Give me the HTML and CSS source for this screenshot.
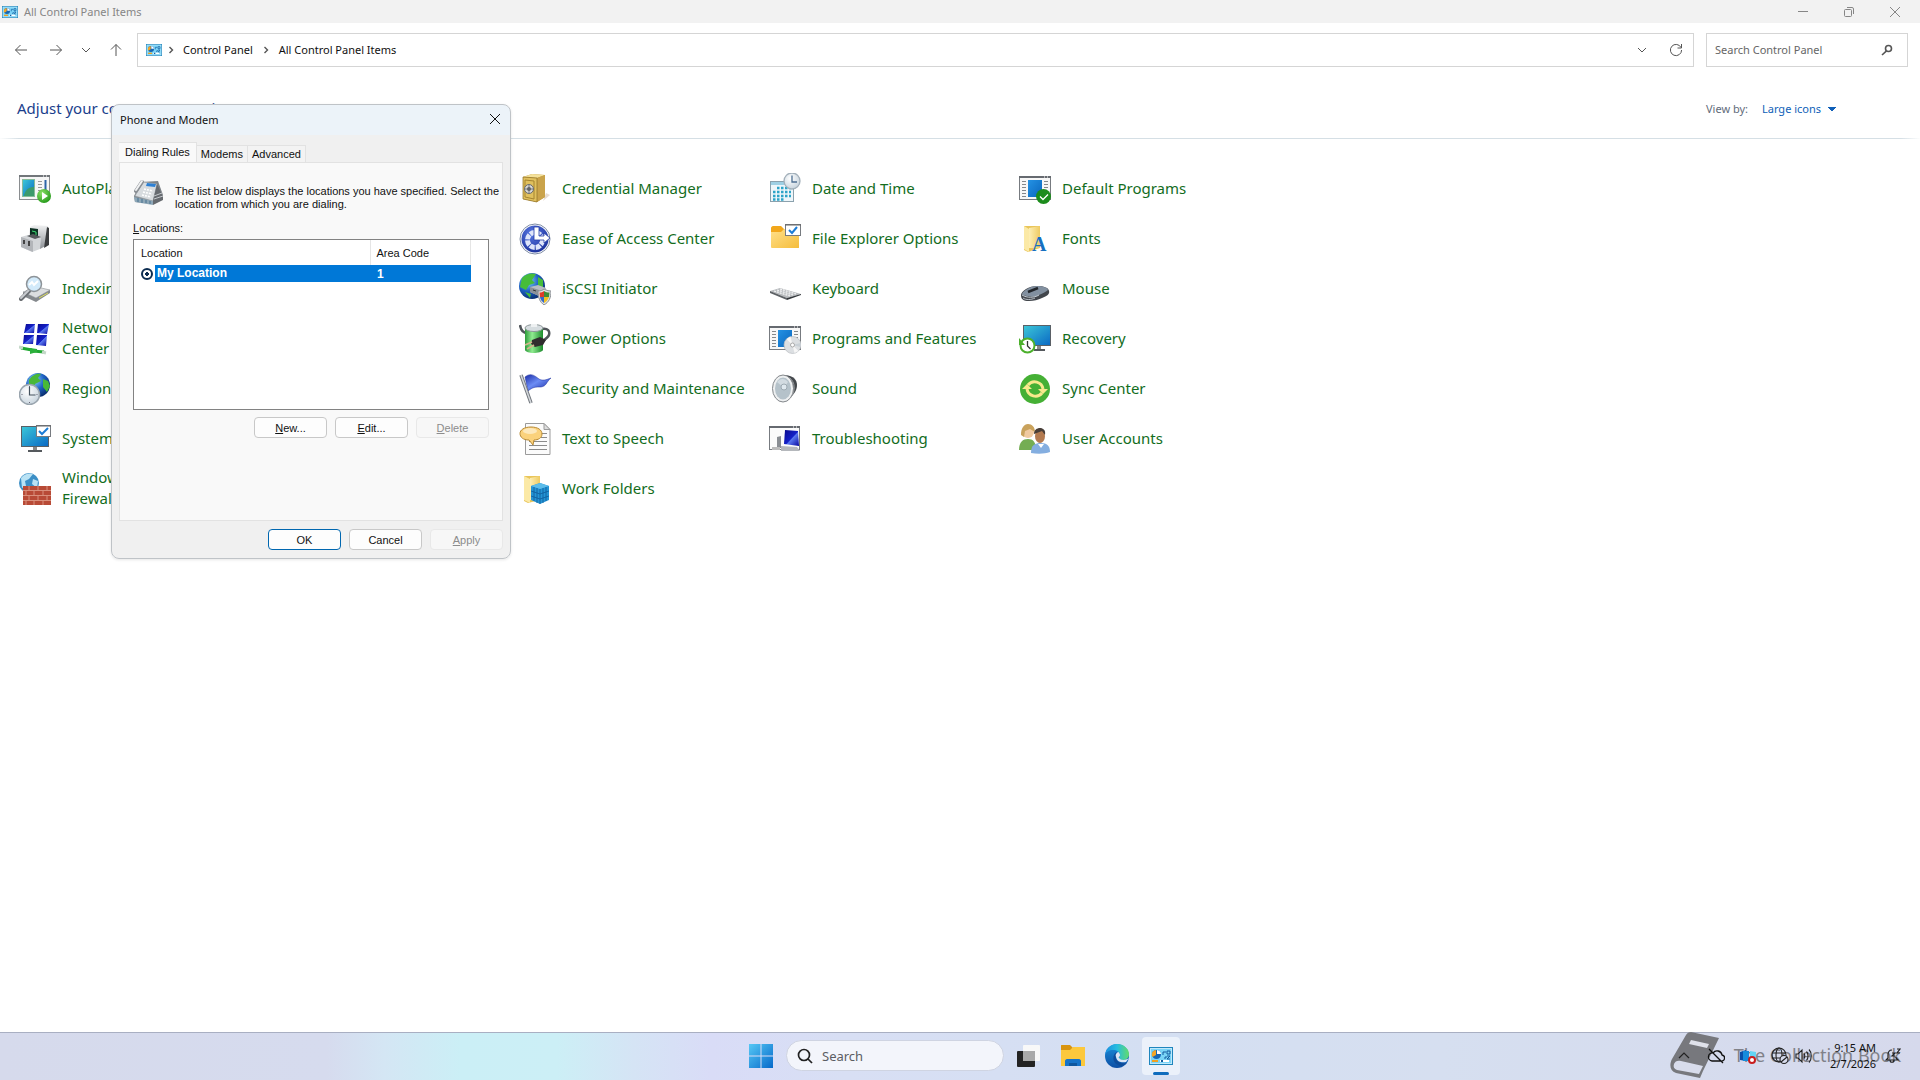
FILE: index.html
```html
<!DOCTYPE html>
<html lang="en">
<head>
    <meta charset="UTF-8">
    <meta name="viewport" content="width=device-width, initial-scale=1.0">
    <title>All Control Panel Items</title>
    <link rel="stylesheet" href="styles.css">
</head>
<body>
    <!-- shared gradients and symbols -->
    <svg class="defs" width="0" height="0" aria-hidden="true">
        <defs>
            <linearGradient id="screen" x1="0" y1="0" x2="1" y2="1"><stop offset="0" stop-color="#3cc8d8"/><stop offset="1" stop-color="#0a68c4"/></linearGradient>
            <linearGradient id="blue" x1="0" y1="0" x2="1" y2="1"><stop offset="0" stop-color="#2492e4"/><stop offset="1" stop-color="#0b66bd"/></linearGradient>
            <linearGradient id="navy" x1="0" y1="0" x2="1" y2="1"><stop offset="0" stop-color="#0a0a8c"/><stop offset=".5" stop-color="#1420c8"/><stop offset=".55" stop-color="#5a78f0"/><stop offset="1" stop-color="#0808a0"/></linearGradient>
            <linearGradient id="gold" x1="0" y1="0" x2="1" y2="1"><stop offset="0" stop-color="#ffe08a"/><stop offset="1" stop-color="#f5bd3c"/></linearGradient>
            <linearGradient id="paper" x1="0" y1="0" x2="1" y2="0"><stop offset="0" stop-color="#fdeeb4"/><stop offset="1" stop-color="#efcb62"/></linearGradient>
            <linearGradient id="steel" x1="0" y1="0" x2="0" y2="1"><stop offset="0" stop-color="#f0f1f2"/><stop offset="1" stop-color="#8d9196"/></linearGradient>
            <linearGradient id="green" x1="0" y1="0" x2="1" y2="0"><stop offset="0" stop-color="#2c9a3a"/><stop offset=".4" stop-color="#90ec90"/><stop offset="1" stop-color="#1b8a2c"/></linearGradient>
            <linearGradient id="flag" x1="0" y1="0" x2="1" y2="1"><stop offset="0" stop-color="#1a2ca8"/><stop offset=".45" stop-color="#6c8cf4"/><stop offset="1" stop-color="#1425a0"/></linearGradient>
            <radialGradient id="sea" cx=".35" cy=".3" r=".8"><stop offset="0" stop-color="#8ed6fa"/><stop offset=".5" stop-color="#1e62c4"/><stop offset="1" stop-color="#06245f"/></radialGradient>
            <radialGradient id="leaf" cx=".35" cy=".3" r=".8"><stop offset="0" stop-color="#8be066"/><stop offset="1" stop-color="#1c9414"/></radialGradient>
            <radialGradient id="royal" cx=".4" cy=".3" r=".8"><stop offset="0" stop-color="#5a7ae4"/><stop offset="1" stop-color="#152a94"/></radialGradient>
            <radialGradient id="dial" cx=".4" cy=".35" r=".7"><stop offset="0" stop-color="#fff"/><stop offset="1" stop-color="#c5d2dc"/></radialGradient>
            <linearGradient id="win" x1="0" y1="0" x2="1" y2="1"><stop offset="0" stop-color="#56c8f5"/><stop offset="1" stop-color="#0669ca"/></linearGradient>
            <linearGradient id="edgeA" x1="0" y1="0" x2="1" y2="0"><stop offset="0" stop-color="#1a8ee0"/><stop offset=".5" stop-color="#27bde0"/><stop offset="1" stop-color="#63dc6a"/></linearGradient>
            <linearGradient id="edgeB" x1="0" y1="0" x2="0" y2="1"><stop offset="0" stop-color="#1a90dc"/><stop offset="1" stop-color="#0c4ea4"/></linearGradient>
        </defs>
        <symbol id="cpanel" viewBox="0 0 24 18">
            <rect x=".5" y=".5" width="23" height="17" fill="#bfe9fb" stroke="#1f86bd"/>
            <rect x="2" y="2" width="20" height="14" fill="#7ad4f7"/>
            <circle cx="7.500" cy="7.500" r="4.500" fill="#1767b4"/>
            <path d="M7 8V3a4.500 4.500 0 0 0-3.500 7z" fill="#f5a623"/>
            <path d="M8 7V3a4.500 4.500 0 0 1 4 4z" fill="#fff"/>
            <path d="M14 8V5h3M18 4h3v3h-3zM15 11h2V9M18 9h3l-3 3h3" fill="none" stroke="#125a9e"/>
            <path d="M3 14h6" stroke="#f0a020" stroke-width="2"/>
            <path d="M11 14h9" stroke="#fff" stroke-width="2"/>
            <path d="M13 13v2" stroke="#125a9e" stroke-width="2"/>
        </symbol>
        <symbol id="chev" viewBox="0 0 10 10"><path d="M1 3l4 4 4-4" fill="none" stroke="currentColor"/></symbol>
        <symbol id="sep" viewBox="0 0 6 8"><path d="M1.500 1l3 3-3 3" fill="none" stroke="currentColor" stroke-width="1.400"/></symbol>
        <symbol id="cross" viewBox="0 0 12 12"><path d="M1 1l10 10M11 1L1 11" stroke="currentColor"/></symbol>
        <symbol id="progwin" viewBox="0 0 32 32">
            <rect x=".5" y="3.500" width="31" height="23" fill="#f7f7f7" stroke="#777b80"/>
            <path d="M0 4h32" stroke="#666a70" stroke-width="2"/>
            <path d="M25 4h1M28 4h1" stroke="#fff"/>
            <path d="M3 8.500h4M3 11.500h4M3 14.500h4M3 17.500h4M3 20.500h4M3 23.500h4M25 8.500h4M25 11.500h4M25 14.500h4" stroke="#84888c"/>
            <rect x="9" y="7" width="14" height="17" fill="url(#blue)"/>
        </symbol>
    </svg>

    <div class="window">
        <header class="titlebar">
            <svg class="cp-small"><use href="#cpanel"/></svg>
            <span class="title">All Control Panel Items</span>
            <div class="win-buttons">
                <button type="button" aria-label="Minimize"><svg width="12" height="12" viewBox="0 0 12 12"><path d="M1 5.500h10" stroke="currentColor"/></svg></button>
                <button type="button" aria-label="Restore"><svg width="12" height="12" viewBox="0 0 12 12" fill="none" stroke="currentColor"><rect x="1.500" y="3.500" width="7" height="7" rx="1"/><path d="M4 1.500h5a1.500 1.500 0 0 1 1.500 1.500v5"/></svg></button>
                <button type="button" aria-label="Close"><svg width="12" height="12"><use href="#cross"/></svg></button>
            </div>
        </header>

        <nav class="toolbar">
            <div class="nav-buttons">
                <button type="button" aria-label="Back"><svg width="14" height="14" viewBox="0 0 14 14" fill="none" stroke="currentColor"><path d="M13 7H1.500M6.500 2l-5 5 5 5"/></svg></button>
                <button type="button" class="forward" aria-label="Forward"><svg width="14" height="14" viewBox="0 0 14 14" fill="none" stroke="currentColor"><path d="M1 7h11.500M7.500 2l5 5-5 5"/></svg></button>
                <button type="button" aria-label="Recent locations"><svg width="10" height="10"><use href="#chev"/></svg></button>
                <button type="button" aria-label="Up"><svg width="14" height="14" viewBox="0 0 14 14" fill="none" stroke="currentColor"><path d="M7 13V1.500M2 6.500l5-5 5 5"/></svg></button>
            </div>
            <div class="address">
                <svg class="cp-small"><use href="#cpanel"/></svg>
                <svg class="sep"><use href="#sep"/></svg>
                <a href="#">Control Panel</a>
                <svg class="sep"><use href="#sep"/></svg>
                <a href="#">All Control Panel Items</a>
                <div class="address-tools">
                    <button type="button" aria-label="Previous locations"><svg width="10" height="10"><use href="#chev"/></svg></button>
                    <button type="button" aria-label="Refresh"><svg width="14" height="14" viewBox="0 0 14 14" fill="none" stroke="currentColor"><path d="M12 4.500A5.600 5.600 0 1 0 12.600 7M12.500 1v4h-4"/></svg></button>
                </div>
            </div>
            <div class="search-box">
                <input type="text" placeholder="Search Control Panel" aria-label="Search Control Panel">
                <svg width="12" height="12" viewBox="0 0 12 12" fill="none" stroke="#555" stroke-width="1.600"><circle cx="7.500" cy="4.500" r="3"/><path d="M5.500 6.800L1 11"/></svg>
            </div>
        </nav>

        <div class="subhead">
            <h1>Adjust your computer's settings</h1>
            <label for="view">View by:</label>
            <select id="view">
                <option>Large icons</option>
                <option>Small icons</option>
                <option>Category</option>
            </select>
        </div>

        <main class="items">
            <a href="#" class="item">
                <svg viewBox="0 0 32 32"><rect x=".5" y="2.500" width="30" height="24" fill="#f6f6f6" stroke="#8a8d90"/><path d="M0 3h31" stroke="#72767a" stroke-width="2"/><path d="M24 3h1M27 3h1" stroke="#fff"/><rect x="3.500" y="6.500" width="12" height="17" fill="url(#screen)" stroke="#8b9"/><path d="M5 22c2-6 5-8 10-8v9H5z" fill="#3c9a6c"/><path d="M19 8.500h4M19 11.500h4M19 14.500h4M19 17.500h4" stroke="#999"/><path d="M26.500 7v10" stroke="#2c64a8" stroke-width="2"/><circle cx="25" cy="23" r="7" fill="url(#leaf)"/><path d="M23 19l6 4-6 4z" fill="#fff"/></svg>
                <span>AutoPlay</span>
            </a>
            <a href="#" class="item">
                <svg viewBox="0 0 32 32"><path d="M11 4l4-2 14 1 1 18-9 5-11-6z" fill="url(#steel)"/><path d="M28 4l2 1v17l-5 3z" fill="#3a3c3e"/><path d="M11 5l8 1v9l-8-2z" fill="#0c3022"/><path d="M13 8l4 1v3" stroke="#3ddc70" fill="none"/><path d="M2 14l7-2 13 3-1 11-8 3-11-5z" fill="#d2d5d8"/><path d="M2 14l12 4v11L2 24z" fill="#b2b5b9"/><path d="M5 17v4M10 18v5" stroke="#444" stroke-width="2"/><path d="M8 13l6-2 8 3-6 2z" fill="#55585b"/></svg>
                <span>Device Manager</span>
            </a>
            <a href="#" class="item">
                <svg viewBox="0 0 32 32"><path d="M4 19l14-5 13 3-14 8z" fill="#dcdee0" stroke="#8c9094" stroke-width=".6"/><path d="M4 19l13 6v4L4 23zM17 25l14-8v3l-14 9z" fill="#85898d"/><path d="M20 25l9-5" stroke="#dadc60"/><path d="M2 26l8-8" stroke="#6b6f73" stroke-width="4" stroke-linecap="round"/><path d="M2 25l8-8" stroke="#c9ccd0" stroke-width="2" stroke-linecap="round"/><circle cx="15" cy="11" r="7.500" fill="#d2eafa" stroke="#8d9398" stroke-width="1.500"/><path d="M10 12l3-3 2 3 4-4" stroke="#fff" stroke-width="2" fill="none"/></svg>
                <span>Indexing Options</span>
            </a>
            <a href="#" class="item">
                <svg viewBox="0 0 32 32"><path d="M7 1h9l-1 9H5z" fill="url(#navy)"/><path d="M19 1h11l-2 10-10-1z" fill="url(#navy)"/><path d="M5 12h10l-1 9H4z" fill="url(#navy)"/><path d="M18 12h10l-1 11-10-1z" fill="url(#navy)"/><path d="M2 25l11 2M14 28l11 1" stroke="#20a832" stroke-width="3"/><path d="M0 24l4 1M23 29l4 1" stroke="#c4d8c8" stroke-width="3"/><path d="M11 25l7 1v3l-7 2z" fill="#2cb03c"/></svg>
                <span>Network and Sharing Center</span>
            </a>
            <a href="#" class="item">
                <svg viewBox="0 0 32 32"><circle cx="19" cy="12" r="12" fill="url(#sea)"/><path d="M10 7c4-6 9-7 12-6l-3 4 3 3-6 3-2 5-4-3zM24 6l5 2 2 5-3 6-4-5z" fill="#48b838"/><circle cx="10.500" cy="21.500" r="10" fill="url(#dial)" stroke="#9aa5ae" stroke-width="1.500"/><path d="M10.500 14v8h6" fill="none" stroke="#44525e" stroke-width="1.200"/><path d="M10.500 13v1M10.500 29v1M2.500 21.500h1M17.500 21.500h1" stroke="#667"/></svg>
                <span>Region</span>
            </a>
            <a href="#" class="item">
                <svg viewBox="0 0 32 32"><rect x="2.500" y="3.500" width="27" height="20" fill="url(#screen)" stroke="#5a6066"/><path d="M14 24h4v4h-4z" fill="#888"/><path d="M9 28h14" stroke="#55595d" stroke-width="2"/><rect x="17.500" y="2.500" width="14" height="11" fill="#fff" stroke="#777b80"/><path d="M17 3h15" stroke="#666"/><path d="M20 8l3 3 6-6" fill="none" stroke="#1c7cd6" stroke-width="2"/></svg>
                <span>System</span>
            </a>
            <a href="#" class="item">
                <svg viewBox="0 0 32 32"><circle cx="10" cy="10" r="10" fill="#3c8fc6"/><path d="M2 5c4-5 9-5 12-4l-4 5-4 2 1 5-4 2zM14 6l5 2-1 7-5-4z" fill="#b9e2f4"/><path d="M4 13h28v19H4z" fill="#b84a36"/><path d="M4 17.500h28M4 22.500h28M4 27.500h28M10 13v4M19 13v4M28 13v4M7 18v4M15 18v4M24 18v4M10 23v4M19 23v4M28 23v4M7 28v4M15 28v4M24 28v4" stroke="#d98f7c"/></svg>
                <span>Windows Defender Firewall</span>
            </a>

            <a href="#" class="item">
                <svg viewBox="0 0 32 32"><path d="M27 20l4 2-7 6z" fill="#e7dcd0"/><path d="M4 4l9-3 13 1v22l-8 5-14-3z" fill="#b9943a"/><path d="M4 4l9-3 13 1-8 3z" fill="#f4e19a"/><path d="M18 5l8-3v22l-8 5z" fill="#caa34a"/><path d="M4 4l14 1v24L4 26z" fill="#e0c05e" stroke="#8d6d22" stroke-width=".7"/><path d="M6 7l9 1v18l-9-2z" fill="none" stroke="#a5842f"/><circle cx="10" cy="16" r="4.500" fill="#d7d7d5" stroke="#66686b"/><path d="M10 11v10M5 16h10" stroke="#77797c"/><circle cx="10" cy="16" r="2" fill="#606367"/></svg>
                <span>Credential Manager</span>
            </a>
            <a href="#" class="item">
                <svg viewBox="0 0 32 32"><circle cx="16" cy="16" r="15" fill="#fff" stroke="#7d8ba4"/><circle cx="16" cy="16" r="13.500" fill="url(#royal)"/><circle cx="16" cy="17" r="7.500" fill="none" stroke="#dfe6fa" stroke-width="5" stroke-dasharray="5 1"/><path d="M15 4h5v9h5v-3l6 5-6 5v-3H15z" fill="#fff" stroke="#243da6" stroke-width=".8"/></svg>
                <span>Ease of Access Center</span>
            </a>
            <a href="#" class="item">
                <svg viewBox="0 0 32 32"><circle cx="13" cy="13" r="13" fill="url(#sea)"/><path d="M3 5c5-5 10-5 14-4l-4 6 3 3-6 2-3 5-6-3zM19 4l5 3v8l-5-3zM6 19l6 2-1 4z" fill="#46bd3a"/><path d="M11 14l8-2 8 3v6l-7 2-9-4z" fill="#b9bec4"/><path d="M11 14l9 3v6l-9-4z" fill="#8c9299"/><path d="M14 17l3 1" stroke="#333"/><path d="M19 18c3 0 5-1 6-2 2 1 4 2 7 2 0 7-2 11-7 14-4-3-6-7-6-14z" fill="#dfe2e4" stroke="#8b8f93"/><path d="M20.500 19.500c2 0 3-.5 4.500-1.500v6h-4z" fill="#e03a28"/><path d="M25 18c2 1 3 1.500 5.500 1.500L30 24h-5z" fill="#3f8d37"/><path d="M21 24h4v6c-2-2-3.500-3-4-6z" fill="#3468c8"/><path d="M25 24h5c-1 3-3 5-5 6z" fill="#f1c022"/></svg>
                <span>iSCSI Initiator</span>
            </a>
            <a href="#" class="item">
                <svg viewBox="0 0 32 32"><path d="M1 2c1 6 3 8 7 8M23 6c6-1 8 2 7 6-1 3-5 5-8 7" fill="none" stroke="#50555a" stroke-width="2.500"/><path d="M6 5v22c1 4 16 4 18 0V5z" fill="url(#green)"/><ellipse cx="15" cy="5" rx="9" ry="3.500" fill="#d6dde0" stroke="#8e9699"/><path d="M12 1h6v3h-6z" fill="#eef1f2"/><path d="M13 17l8-3 6 3-3 5-8 2-4-3z" fill="#302c2e"/><path d="M13 19l-7 3M15 22l-7 4" stroke="#d2b48c" stroke-width="1.800"/></svg>
                <span>Power Options</span>
            </a>
            <a href="#" class="item">
                <svg viewBox="0 0 32 32"><path d="M6 4c6-5 10-1 14 2 3 2 7 1 12-1-5 4-4 8-10 9-6 0-8 0-13 4z" fill="url(#flag)" stroke="#1c2e9c" stroke-width=".5"/><path d="M2 2l10 28" stroke="#71767c" stroke-width="3.500"/><path d="M2 2l10 28" stroke="#d4d8dc" stroke-width="1.500"/></svg>
                <span>Security and Maintenance</span>
            </a>
            <a href="#" class="item">
                <svg viewBox="0 0 32 32"><path d="M6.500.5H25l6 6v25H6.500z" fill="#fbfbfb" stroke="#9b9b9b"/><path d="M25 .5v6h6z" fill="#ddd" stroke="#9b9b9b"/><path d="M10 18.500h18M10 22.500h18M10 26.500h18M22 10.500h6M22 14.500h6" stroke="#8b8b8b"/><path d="M12 4c7 0 11 3 11 7s-4 6-8 6l-1 5-4-5c-6 0-9-3-9-6.500S5 4 12 4z" fill="#fbd27c" stroke="#b88a34"/><ellipse cx="11" cy="8" rx="7" ry="3" fill="#fde9bd"/></svg>
                <span>Text to Speech</span>
            </a>
            <a href="#" class="item">
                <svg viewBox="0 0 32 32"><path d="M5 3h16v24l-12 3-4-2z" fill="#e9c55a"/><path d="M5 3l6 3v24l-6-3z" fill="#fbe9a6"/><path d="M11 5l10-2v24H11z" fill="url(#paper)"/><path d="M12 13l9-3 9 3v14l-9 4-9-4z" fill="#2494d4"/><path d="M12 13l9-3 9 3-9 3z" fill="#5cbcea"/><path d="M21 16v15M15 14v14M18 15v15M24 15v15M27 14v14M12 18l9 3 9-3M12 23l9 3 9-3" stroke="#0f5c9a" stroke-width=".8" fill="none"/></svg>
                <span>Work Folders</span>
            </a>

            <a href="#" class="item">
                <svg viewBox="0 0 32 32"><rect x="1.500" y="8.500" width="23" height="20" fill="#eef6fa" stroke="#8ba1ad"/><path d="M2 9h22v3H2z" fill="#9fd0e4"/><path d="M8 15h14M4 19h18M4 23h18M4 26.500h11" stroke="#2da4c8" stroke-width="2.500" stroke-dasharray="2.500 1.500"/><circle cx="23" cy="8" r="8" fill="url(#dial)" stroke="#a3b0ba" stroke-width="1.300"/><path d="M23 2.500V9h5" fill="none" stroke="#4d6f92" stroke-width="1.300"/></svg>
                <span>Date and Time</span>
            </a>
            <a href="#" class="item">
                <svg viewBox="0 0 32 32"><path d="M2 5c0-1 1-2 2-2h8l3 3v6H2z" fill="#f2a71b"/><path d="M2 9h10l3-3h15v18c0 1 0 1-1 1H3c-1 0-1-1-1-1z" fill="url(#gold)"/><rect x="16.500" y="1.500" width="15" height="11" fill="#fff" stroke="#777b80"/><path d="M16 2h16" stroke="#666"/><path d="M20 7l3 3 5-6" fill="none" stroke="#1c7cd6" stroke-width="2"/></svg>
                <span>File Explorer Options</span>
            </a>
            <a href="#" class="item">
                <svg viewBox="0 0 32 32"><path d="M1 18l10-3 21 6-14 4z" fill="#b8bbbe"/><path d="M1 18l17 7v2L1 20z" fill="#5d6165"/><path d="M18 25l14-4v1l-14 5z" fill="#35393d"/><path d="M5 18l16 5M8 17l16 5M11 16l16 5" stroke="#f4f5f6" stroke-width="1.300" stroke-dasharray="2 1"/></svg>
                <span>Keyboard</span>
            </a>
            <a href="#" class="item">
                <svg viewBox="0 0 32 32"><use href="#progwin"/><circle cx="23.500" cy="22" r="8.500" fill="#dcdfe2" stroke="#b8bcc0" stroke-width=".7"/><path d="M23.500 22l-6-6 4-2.500zM23.500 22l6 6-4 2z" fill="#f6f6f6"/><path d="M23.500 22l8-2v4z" fill="#c9d0d6"/><circle cx="23.500" cy="22" r="2" fill="#fff" stroke="#aaa"/></svg>
                <span>Programs and Features</span>
            </a>
            <a href="#" class="item">
                <svg viewBox="0 0 32 32"><path d="M16 2c9 1 12 5 12 10s-3 11-12 16z" fill="#44484c"/><path d="M21 5c5 4 6 13 1 19" fill="none" stroke="#8f9396"/><ellipse cx="14" cy="15.500" rx="10.500" ry="13.500" fill="#eef0f1" stroke="#83878b"/><ellipse cx="14" cy="15.500" rx="8" ry="11" fill="#b5c2ca"/><path d="M8 9c3-4 8-4 11 0l-4 6z" fill="#d2dbe1"/><circle cx="15" cy="14" r="3" fill="#dfe8ee" stroke="#9eaab2"/></svg>
                <span>Sound</span>
            </a>
            <a href="#" class="item">
                <svg viewBox="0 0 32 32"><rect x=".5" y="3.500" width="30" height="23" fill="#fbfbfb" stroke="#777b80"/><path d="M0 4h31" stroke="#666a70" stroke-width="2"/><path d="M24 4h1M27 4h1" stroke="#fff"/><path d="M8 14l4-1v12H8z" fill="#8a8e93"/><path d="M3 24h8v3H3z" fill="#bbb"/><path d="M16 7l13 1 1 15-15-2z" fill="url(#navy)"/><path d="M12 23l16 1 3 4H12z" fill="#b5b8bc"/></svg>
                <span>Troubleshooting</span>
            </a>

            <a href="#" class="item">
                <svg viewBox="0 0 32 32"><use href="#progwin"/><circle cx="24.500" cy="23.500" r="7.500" fill="#1c8c1c"/><path d="M21 23.500l3 3 5-5" fill="none" stroke="#fff" stroke-width="1.300"/></svg>
                <span>Default Programs</span>
            </a>
            <a href="#" class="item">
                <svg viewBox="0 0 32 32"><path d="M5 3h16v22l-12 4-4-2z" fill="#e9c55a"/><path d="M5 3l5 3v23l-5-3z" fill="#fbe9a6"/><path d="M10 5l11-2v22H10z" fill="url(#paper)"/><text x="13" y="28" class="glyph">A</text></svg>
                <span>Fonts</span>
            </a>
            <a href="#" class="item">
                <svg viewBox="0 0 32 32"><path d="M2 22c0-4 8-9 16-9 7 0 12 2 12 5 1 3-2 5-7 7-4 2-8 3-13 3-6 0-8-2-8-6z" fill="#42464c"/><path d="M3 21c1-3 8-8 15-8 6 0 11 2 11 4-2 2-5 3-9 5-4 2-7 2-11 1-3 0-6-1-6-2z" fill="#8290a0"/><path d="M3 22c5 3 12 3 17 0" fill="none" stroke="#c0c8d0"/><path d="M9 19l10-4" stroke="#22262b" stroke-width="2.500"/><path d="M4 25c3 2 8 2 12 0" fill="none" stroke="#b8bec5"/></svg>
                <span>Mouse</span>
            </a>
            <a href="#" class="item">
                <svg viewBox="0 0 32 32"><rect x="4.500" y="2.500" width="27" height="20" fill="url(#screen)" stroke="#5a6066"/><path d="M18 23h4v4h-4z" fill="#888"/><path d="M15 27h11" stroke="#55595d" stroke-width="2"/><circle cx="8.500" cy="22.500" r="7" fill="#fff" stroke="#4cb02c" stroke-width="2"/><path d="M0 15v7h6z" fill="#4cb02c"/><path d="M8.500 18v5l3 3" fill="none" stroke="#333" stroke-width="1.300"/></svg>
                <span>Recovery</span>
            </a>
            <a href="#" class="item">
                <svg viewBox="0 0 32 32"><circle cx="16" cy="16" r="15" fill="#45b035"/><path d="M9 12a8.500 8.500 0 0 1 15 4M23 20a8.500 8.500 0 0 1-15-4" fill="none" stroke="#f7e98c" stroke-width="3"/><path d="M19 16h10l-5 5zM3 16h10l-5-5z" fill="#f7e98c"/></svg>
                <span>Sync Center</span>
            </a>
            <a href="#" class="item">
                <svg viewBox="0 0 32 32"><path d="M0 27c0-8 4-11 9-11s8 3 8 11z" fill="#74ad53"/><circle cx="9" cy="9" r="6" fill="#f0c9a0"/><path d="M2 12c0-7 3-11 7-11s7 3 7 8l-5-3-5 2-1 6z" fill="#c9a25c"/><path d="M12 30c0-8 4-10 10-10s9 3 9 9c-5 2-13 2-19 1z" fill="#84aee0"/><ellipse cx="21" cy="13" rx="5" ry="7" fill="#b37a50"/><path d="M15 11c0-4 3-6 6-6s6 2 5 7l-3-4z" fill="#483e38"/><path d="M19 21l3 4 3-4z" fill="#fff"/></svg>
                <span>User Accounts</span>
            </a>
        </main>
    </div>

    <section class="dialog" role="dialog" aria-labelledby="dialog-title">
        <header class="dialog-head">
            <h2 id="dialog-title">Phone and Modem</h2>
            <button type="button" aria-label="Close"><svg width="12" height="12"><use href="#cross"/></svg></button>
        </header>
        <div class="tabs" role="tablist">
            <button type="button" role="tab" class="tab active" aria-selected="true">Dialing Rules</button>
            <button type="button" role="tab" class="tab">Modems</button>
            <button type="button" role="tab" class="tab">Advanced</button>
        </div>
        <div class="panel">
            <div class="intro">
                <svg width="32" height="32" viewBox="0 0 32 32">
                    <path d="M1 19l7-14 17-1 5 14v4l-10 5L2 25z" fill="#7d8388"/>
                    <path d="M2 19l8-14 14 2-4 17z" fill="#d8dcdf" stroke="#999ea3" stroke-width=".6"/>
                    <path d="M1 20l19 4v4L2 25z" fill="#8ea7b7"/>
                    <path d="M20 24l4-17 6 13v3l-10 5z" fill="#666a6f"/>
                    <path d="M21 19l8-3M21 22l9-3" stroke="#c4c8cc"/>
                    <path d="M14 6l9 1-1 3-9-1z" fill="#2c80d4"/>
                    <path d="M11 12l9 2M10 15l9 2M9 18l9 2" stroke="#fff" stroke-width="1.500" stroke-dasharray="2 1"/>
                    <path d="M3 14l6-9" stroke="#8b9095" stroke-width="4" stroke-linecap="round"/>
                    <path d="M3 13l6-9" stroke="#f1f2f3" stroke-width="2" stroke-linecap="round"/>
                    <path d="M5 21v4M9 22v4M13 23v3M17 24v3" stroke="#46708f"/>
                </svg>
                <p>The list below displays the locations you have specified. Select the<br>location from which you are dialing.</p>
            </div>
            <p class="list-label" id="loc-label"><u>L</u>ocations:</p>
            <div class="list">
                <table aria-labelledby="loc-label">
                    <thead>
                        <tr><th class="col-loc">Location</th><th class="col-code">Area Code</th></tr>
                    </thead>
                    <tbody>
                        <tr>
                            <td><label class="loc"><input type="radio" name="location" checked><span>My Location</span></label></td>
                            <td class="code">1</td>
                        </tr>
                    </tbody>
                </table>
            </div>
            <div class="buttons">
                <button type="button" class="btn"><u>N</u>ew...</button>
                <button type="button" class="btn"><u>E</u>dit...</button>
                <button type="button" class="btn" disabled><u>D</u>elete</button>
            </div>
        </div>
        <footer class="buttons dialog-foot">
            <button type="button" class="btn default">OK</button>
            <button type="button" class="btn">Cancel</button>
            <button type="button" class="btn" disabled><u>A</u>pply</button>
        </footer>
    </section>

    <footer class="taskbar">
        <div class="apps">
            <button type="button" class="app" aria-label="Start"><svg width="24" height="24" viewBox="0 0 24 24" fill="url(#win)"><path d="M0 0h11.500v11.500H0zM12.500 0H24v11.500H12.500zM0 12.500h11.500V24H0zM12.500 12.500H24V24H12.500z"/></svg></button>
            <label class="task-search">
                <svg width="16" height="16" viewBox="0 0 16 16" fill="none" stroke="#222" stroke-width="1.700"><circle cx="7" cy="7" r="5.500"/><path d="M11 11l4 4"/></svg>
                <input type="text" placeholder="Search" aria-label="Search">
            </label>
            <button type="button" class="app" aria-label="Task View"><svg width="24" height="24" viewBox="0 0 24 24"><rect x="6" y="1" width="17" height="16" rx="1" fill="#f8f8f8"/><rect x="0" y="7" width="18" height="16" rx="1" fill="#232323"/><path d="M6 7h12v10H6z" fill="#a9a9a9"/></svg></button>
            <button type="button" class="app" aria-label="File Explorer"><svg width="24" height="24" viewBox="0 0 24 24"><path d="M0 2c0-1 0-1 1-1h8l3 3v4H0z" fill="#d9940e"/><path d="M0 6h9l3-3h12v18c0 1 0 1-1 1H1c-1 0-1 0-1-1z" fill="#fcc83c"/><path d="M4 22v-5c0-1 1-2 2-2h12c1 0 2 1 2 2v5z" fill="#1673c8"/><path d="M8 22v-3h8v3z" fill="#0f579e"/></svg></button>
            <button type="button" class="app" aria-label="Edge"><svg width="24" height="24" viewBox="0 0 24 24"><circle cx="12" cy="12" r="12" fill="url(#edgeB)"/><path d="M0 11C1 4 6 0 12 0c7 0 12 5 12 10 0 4-3 6-6 6-3 0-4-1-4-2s1-1 1-3c0-3-3-5-7-5-4 0-7 2-8 5z" fill="url(#edgeA)"/><path d="M9 11c-2 5 1 10 7 11 2 0 4-1 6-3-6 2-12-2-11-7 0-2 1-3 2-3-2-1-3 0-4 2z" fill="#0d4c9a"/><path d="M14 14c-1-1 1-1 1-3 0-1-1-3-2-3-2 1-3 3-2 5 1 5 6 6 10 5l3-4c-2 2-8 3-10 0z" fill="#dbe6f5"/></svg></button>
            <button type="button" class="app current" aria-label="Control Panel"><svg width="24" height="18"><use href="#cpanel"/></svg></button>
        </div>
        <div class="tray">
            <svg width="12" height="16" viewBox="0 0 12 16" fill="none" stroke="#222" stroke-width="1.200"><path d="M1 10l5-5 5 5"/></svg>
            <svg class="cloud" width="18" height="16" viewBox="0 0 18 16" fill="none" stroke="#111" stroke-width="1.300"><path d="M5 13h9a3 3 0 0 0 1-6 5 5 0 0 0-9-2 4 4 0 0 0-1 8zM2 1l14 14"/></svg>
            <svg class="store" width="18" height="16" viewBox="0 0 18 16"><path d="M1 4l6-2v11l-6-1z" fill="#0b4ea8"/><path d="M4 3h6v10H4z" fill="#168bdc"/><path d="M11 3l6 1v6h-6z" fill="#63d4f4"/><circle cx="13" cy="12" r="3" fill="#fff" stroke="#c81e1e" stroke-width="2"/></svg>
            <svg class="globe" width="18" height="18" viewBox="0 0 18 18" fill="none" stroke="#222" stroke-width="1.100"><circle cx="8" cy="8" r="7"/><ellipse cx="8" cy="8" rx="3" ry="7"/><path d="M1 6h14M1 11h9"/><circle cx="13" cy="12.500" r="4" fill="#d6daeb"/><path d="M10 15l6-5"/></svg>
            <svg width="18" height="16" viewBox="0 0 18 16" fill="none" stroke="#222" stroke-width="1.100"><path d="M1 6h2l4-4v12l-4-4H1zM9 5.500c1 1 1 4 0 5M11.500 3.500c2 2 2 7 0 9M14 1.500c3 3 3 10 0 13"/></svg>
            <time class="clock">9:15 AM<br>2/7/2026</time>
            <svg width="16" height="16" viewBox="0 0 16 16" fill="none" stroke="#222" stroke-width="1.200"><path d="M7 2C4 2 3 4 3 7v3l-2 2h12l-2-2V9M5 12c0 3 4 3 4 0M7 5h3L7 8h3M12 1h3l-3 4h3"/></svg>
        </div>
    </footer>

    <div class="watermark">
        <svg width="50" height="46" viewBox="0 0 50 46"><path d="M21 0l28 6-16 33-3 7L6 41C0 39-1 33 2 27L16 3c1-2 3-3 5-3z" fill="#77787d"/><path d="M4 32c1-3 4-4 7-3l22 5-4 8L7 38c-3-1-4-3-3-6z" fill="#d8dcec"/><path d="M21 8l18 4-2 4-18-4z" fill="#dfe1ea"/></svg>
        <span>The Collection Book</span>
    </div>
</body>
</html>
```

FILE: styles.css
```css
* {
    box-sizing: border-box;
}
body {
    margin: 0;
    min-height: 100vh;
    display: flex;
    flex-direction: column;
    background: #fff;
    color: #111;
    font-family: "Noto Sans", "Open Sans", sans-serif;
    font-size: 11px;
}
button {
    font: inherit;
    color: inherit;
    background: none;
    border: 0;
    padding: 0;
}
button, a, label {
    cursor: pointer;
}
a {
    color: inherit;
    text-decoration: none;
}
svg {
    display: block;
    flex: none;
}
.defs {
    position: absolute;
}
.window {
    flex: 1;
}

/* title bar */
.titlebar {
    display: flex;
    align-items: center;
    height: 23px;
    padding-left: 2px;
    background: #f2f2f2;
    color: #868686;
}
.cp-small {
    width: 16px;
    height: 12px;
}
.title {
    margin-left: 6px;
}
.win-buttons {
    display: flex;
    margin-left: auto;
    margin-right: 2px;
}
.win-buttons button {
    display: grid;
    place-items: center;
    width: 46px;
    height: 20px;
}

/* navigation row */
.toolbar {
    display: flex;
    align-items: center;
    padding: 10px 12px 10px 0;
    color: #555;
}
.nav-buttons {
    display: flex;
    align-items: center;
    width: 137px;
    padding-left: 14px;
    gap: 18px;
}
.nav-buttons .forward {
    margin-left: 3px;
}
.address {
    flex: 1;
    display: flex;
    align-items: center;
    height: 34px;
    padding: 0 10px 0 8px;
    border: 1px solid #d5d5d5;
}
.address a {
    padding-bottom: 2px;
    color: #111;
}
.sep {
    width: 6px;
    height: 8px;
    margin: 0 9px 0 6px;
}
.address a + .sep {
    margin: 0 10px;
}
.address-tools {
    display: flex;
    align-items: center;
    gap: 22px;
    margin-left: auto;
}
.search-box {
    display: flex;
    align-items: center;
    width: 202px;
    height: 34px;
    margin-left: 12px;
    padding: 0 14px 0 8px;
    border: 1px solid #d5d5d5;
}
.search-box input {
    flex: 1;
    min-width: 0;
    padding: 0 0 2px;
    border: 0;
    outline: 0;
    background: none;
    font: inherit;
}
.search-box input::placeholder {
    color: #666;
}

/* heading */
.subhead {
    display: flex;
    align-items: center;
    height: 62px;
    padding: 2px 84px 0 17px;
    border-bottom: 1px solid;
    border-image: linear-gradient(to right, #fff, #d5dfe5 20px, #d5dfe5 calc(100% - 20px), #fff) 1;
}
.subhead h1 {
    flex: 1;
    margin: 0;
    padding-bottom: 2px;
    font-size: 15px;
    font-weight: normal;
    color: #1a3e8c;
}
.subhead label {
    margin-right: 14px;
    color: #5f6b7a;
}
.subhead select {
    appearance: none;
    width: 74px;
    padding: 0;
    border: 0;
    font: inherit;
    color: #0f5fb8;
    background: conic-gradient(from -45deg at 50% 100%, #0f5fb8 90deg, transparent 0) right 6px / 8px 4px no-repeat;
}

/* large icon list, filled column by column */
.items {
    display: grid;
    grid-template-rows: repeat(7, 50px);
    grid-template-columns: repeat(5, 250px);
    grid-auto-flow: column;
    padding: 25px 19px;
}
.item {
    display: flex;
    align-items: center;
    gap: 11px;
    padding-right: 32px;
    font-size: 15px;
    line-height: 21px;
    color: #136d1d;
}
.item:nth-child(n + 8) {
    grid-column: 3;
    padding-right: 0;
}
.item:nth-child(n + 15) {
    grid-column: 4;
}
.item:nth-child(n + 21) {
    grid-column: 5;
}
.item svg {
    width: 32px;
    height: 32px;
}
.item span {
    padding-bottom: 2px;
}
.glyph {
    font-family: "Liberation Serif", serif;
    font-size: 20px;
    font-weight: bold;
    fill: #1670c0;
}

/* phone and modem dialog */
.dialog {
    position: absolute;
    left: 111px;
    top: 104px;
    width: 400px;
    padding: 0 7px 8px;
    border: 1px solid #bfc3c7;
    border-radius: 8px;
    background: linear-gradient(#ecf3f9 30px, #f0f0f0 30px);
    box-shadow: 0 1px 3px rgba(0, 0, 0, 0.1);
    font-family: "Liberation Sans", Arial, sans-serif;
}
.dialog-head {
    display: flex;
    align-items: center;
    justify-content: space-between;
    height: 30px;
    padding: 0 2px 2px 1px;
    font-family: "Noto Sans", "Open Sans", sans-serif;
}
.dialog-head h2 {
    margin: 0;
    font-size: 11px;
    font-weight: normal;
}
.tabs {
    display: flex;
    align-items: flex-end;
    margin-top: 7px;
}
.tab {
    height: 17px;
    padding: 0 4px;
    border: 1px solid #e2e2e2;
    border-width: 1px 1px 0 0;
    background: #f3f3f3;
}
.tab.active {
    height: 20px;
    padding: 0 6px 2px;
    background: #f9f9f9;
}
.panel {
    height: 359px;
    padding: 14px 13px 0;
    border: 1px solid #e2e2e2;
    background: #f9f9f9;
}
.intro {
    display: flex;
    gap: 10px;
    height: 40px;
}
.intro p {
    margin: 8px 0 0;
    line-height: 13px;
    white-space: nowrap;
}
.list-label {
    margin: 4px 0;
    line-height: 14px;
}
.list {
    height: 171px;
    border: 1px solid #828282;
    background: #fff;
}
table {
    width: 337px;
    border-collapse: collapse;
    table-layout: fixed;
}
th {
    height: 25px;
    padding: 0 7px;
    border-right: 1px solid #e5e5e5;
    text-align: left;
    font-weight: normal;
}
.col-loc {
    width: 236px;
}
.col-code {
    padding-left: 6px;
}
td {
    height: 17px;
    padding: 0;
    font-size: 12px;
    font-weight: bold;
    color: #fff;
}
.code {
    padding-left: 7px;
    background: #0078d7;
}
.loc {
    display: flex;
    align-items: center;
    padding-left: 7px;
}
.loc input {
    appearance: none;
    width: 12px;
    height: 12px;
    margin: 0 2px 0 0;
    border: 2px solid #0c2c50;
    border-radius: 50%;
    background: radial-gradient(#0c2c50 2px, #fff 2px);
}
.loc span {
    flex: 1;
    padding-left: 2px;
    line-height: 17px;
    background: #0078d7;
}
.buttons {
    display: flex;
    justify-content: flex-end;
    gap: 8px;
    margin-top: 7px;
}
.dialog-foot {
    margin-top: 8px;
}
.btn {
    width: 73px;
    height: 21px;
    border: 1px solid #c8c8c8;
    border-radius: 4px;
    background: #fdfdfd;
}
.btn.default {
    border-color: #0067b0;
}
.btn:disabled {
    border-color: #e8e8e8;
    background: #f7f7f7;
    color: #8c8c8c;
}

/* taskbar */
.taskbar {
    display: grid;
    grid-template-columns: 1fr auto 1fr;
    align-items: center;
    height: 48px;
    border-top: 1px solid #a9afc2;
    background: linear-gradient(to right, #d6daec, #d6dbee 17%, #d4e6f4 20%, #cbeff6 24%, #cceff6 29%, #d5e4f5 33%, #d9dcf7 37%, #d8dff4 44%, #d4dff2 60%, #d6dff0 75%, #d6d9ec);
}
.apps {
    grid-column: 2;
    display: flex;
    align-items: center;
    gap: 6px;
    padding: 0 0 2px 2px;
}
.app {
    position: relative;
    display: grid;
    place-items: center;
    width: 38px;
    height: 38px;
    border-radius: 4px;
}
.app.current {
    background: #ebf1fa;
}
.app.current::after {
    content: "";
    position: absolute;
    left: 11px;
    bottom: 0;
    width: 16px;
    height: 3px;
    border-radius: 2px;
    background: #0f6cbd;
}
.task-search {
    display: flex;
    align-items: center;
    gap: 9px;
    width: 218px;
    height: 31px;
    padding: 0 10px;
    border: 1px solid #cfd4e2;
    border-radius: 16px;
    background: #f3f5fb;
}
.task-search input {
    flex: 1;
    min-width: 0;
    padding: 0;
    border: 0;
    outline: 0;
    background: none;
    font: inherit;
    font-size: 13px;
}
.task-search input::placeholder {
    color: #5b5d63;
}
.tray {
    position: relative;
    z-index: 1;
    display: flex;
    align-items: center;
    justify-content: flex-end;
    padding: 0 19px 2px 0;
}
.cloud {
    margin-left: 17px;
}
.store {
    margin: 0 14px;
}
.globe {
    margin-right: 6px;
}
.clock {
    margin: 0 9px 0 17px;
    text-align: right;
    line-height: 16px;
}
.watermark {
    position: absolute;
    right: 19px;
    bottom: 2px;
    display: flex;
    align-items: center;
    gap: 14px;
    color: #808188;
    font-size: 18px;
}
```
